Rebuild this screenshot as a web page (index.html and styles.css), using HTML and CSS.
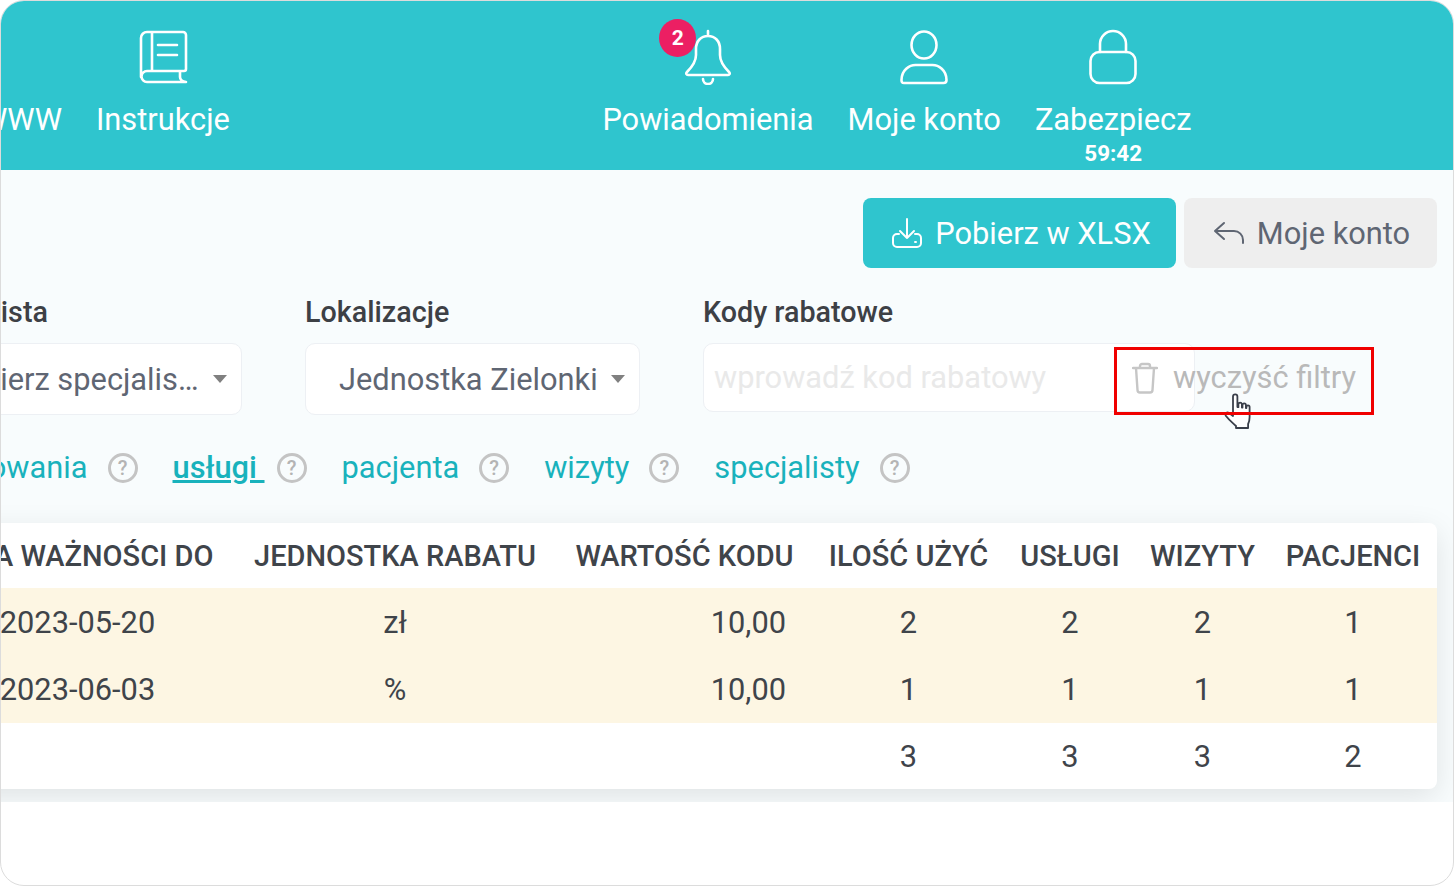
FILE: index.html
```html
<!DOCTYPE html>
<html lang="pl">
<head>
<meta charset="UTF-8" />
<title>Kody rabatowe</title>
<link rel="stylesheet" href="styles.css">
</head>
<body>
<div class="frame">
  <header class="topbar">
    <div class="nav-left">
      <a class="nav-item nav-www"><span class="nav-label">WWW</span></a>
      <a class="nav-item">
        <svg class="nav-icon" viewBox="0 0 50 56"><path d="M3 48V9a6 6 0 0 1 6-6h36a3 3 0 0 1 3 3v34a2 2 0 0 1-2 2H9a5.500 5.500 0 0 0 0 11h39M14 3v39M20 16h19M20 26h19M42 42v6q0 4 6 5"/></svg>
        <span class="nav-label">Instrukcje</span>
      </a>
    </div>
    <div class="nav-right">
      <a class="nav-item">
        <span class="badge">2</span>
        <svg class="nav-icon" viewBox="0 0 50 56"><path d="M25 7c-7 0-12 5-12 13v6c0 7-4 12-9 17-1.500 1.500-.5 3 1 3h40c1.500 0 2.500-1.500 1-3-5-5-9-10-9-17v-6c0-8-5-13-12-13zM25 7V2M20 50a5 5 0 0 0 10 0"/></svg>
        <span class="nav-label">Powiadomienia</span>
      </a>
      <a class="nav-item">
        <svg class="nav-icon" viewBox="0 0 50 56"><ellipse cx="25" cy="16" rx="12.500" ry="13.500"/><path d="M2.500 51c0-10 8-15 14-15h17c6 0 14 5 14 15 0 2-1 3-3 3H5c-2 0-2.500-1-2.500-3z"/></svg>
        <span class="nav-label">Moje konto</span>
      </a>
      <a class="nav-item">
        <svg class="nav-icon" viewBox="0 0 50 56"><path d="M12 23V15a13 13 0 0 1 26 0v8"/><rect x="2.500" y="23" width="45" height="31" rx="9"/></svg>
        <span class="nav-label">Zabezpiecz</span>
        <span class="timer">59:42</span>
      </a>
    </div>
  </header>

  <section class="content">
    <div class="actions">
      <button class="btn btn-primary">
        <svg class="btn-icon" viewBox="0 0 32 32"><path d="M16 2v19M9 14l7 7 7-7M8 17H6a4 4 0 0 0-4 4v5a4 4 0 0 0 4 4h20a4 4 0 0 0 4-4v-5a4 4 0 0 0-4-4h-2"/><path d="M24 25h1"/></svg>
        Pobierz w XLSX
      </button>
      <button class="btn btn-grey">
        <svg class="btn-icon" viewBox="0 0 32 32"><path d="M11 6L2 14l9 8M2 14h19c5 0 9 4 9 9v3"/></svg>
        Moje konto
      </button>
    </div>

    <div class="filters">
      <div class="field">
        <label class="field-label">Specjalista</label>
        <div class="select"><span class="select-text">Wybierz specjalis…</span><i class="caret"></i></div>
      </div>
      <div class="field">
        <label class="field-label">Lokalizacje</label>
        <div class="select"><span class="select-text">Jednostka Zielonki</span><i class="caret"></i></div>
      </div>
      <div class="field field-code">
        <label class="field-label">Kody rabatowe</label>
        <input class="code-input" type="text" placeholder="wprowadź kod rabatowy" />
      </div>
      <a class="clear">
        <svg class="clear-icon" viewBox="0 0 26 32"><path d="M1 6h24M8 6V4a2 2 0 0 1 2-2h6a2 2 0 0 1 2 2v2M4 6l1.500 22a2.500 2.500 0 0 0 2.500 2.500h10a2.500 2.500 0 0 0 2.500-2.500L22 6"/></svg>
        wyczyść filtry
      </a>
    </div>

    <div class="sorters">
      <a class="sorter">Według grupowania</a><i class="help">?</i>
      <a class="sorter sorter-active">usługi&nbsp;</a><i class="help">?</i>
      <a class="sorter">pacjenta</a><i class="help">?</i>
      <a class="sorter">wizyty</a><i class="help">?</i>
      <a class="sorter">specjalisty</a><i class="help">?</i>
    </div>

    <div class="card">
      <table class="report">
        <colgroup>
          <col class="c-date"><col class="c-unit"><col class="c-value"><col class="c-uses"><col class="c-serv"><col class="c-visits"><col class="c-pat">
        </colgroup>
        <thead>
          <tr><th>DATA WAŻNOŚCI DO</th><th>JEDNOSTKA RABATU</th><th class="th-value">WARTOŚĆ KODU</th><th>ILOŚĆ UŻYĆ</th><th>USŁUGI</th><th>WIZYTY</th><th>PACJENCI</th></tr>
        </thead>
        <tbody>
          <tr class="row-mark row-first"><td>2023-05-20</td><td>zł</td><td class="num">10,00</td><td>2</td><td>2</td><td>2</td><td>1</td></tr>
          <tr class="row-mark"><td>2023-06-03</td><td>%</td><td class="num">10,00</td><td>1</td><td>1</td><td>1</td><td>1</td></tr>
          <tr class="row-total"><td></td><td></td><td></td><td>3</td><td>3</td><td>3</td><td>2</td></tr>
        </tbody>
      </table>
    </div>
  </section>

  <svg class="cursor" viewBox="0 0 28 38"><path d="M9 22V3.500a2.200 2.200 0 0 1 4.400 0V14l1 .2V11a1.800 1.800 0 0 1 3.500 0v3.500h.6V12a1.700 1.700 0 0 1 3.400 0v3h.5v-1a1.600 1.600 0 0 1 3.200 0v10c0 3-.5 5-1.500 7v4H12v-2C9 30 5 27 2 23c-1.500-2.500 1-4.500 3-3l4 3z"/></svg>
  <div class="highlight"></div>
</div>
</body>
</html>
```

FILE: styles.css
```css
* {
  box-sizing: border-box;
}
html, body {
  margin: 0;
  height: 100%;
  background: #fff;
  overflow: hidden;
}
body {
  font-family: Roboto, "Liberation Sans", sans-serif;
}
.frame {
  position: relative;
  width: 1454px;
  height: 886px;
  background: #fff;
  border: 1px solid #dcdcdc;
  border-radius: 24px;
  overflow: hidden;
}

/* top bar */
.topbar {
  display: flex;
  height: 169px;
  background: #2fc5ce;
  color: #fff;
}
.nav-left, .nav-right {
  display: flex;
  gap: 34px;
}
.nav-left {
  margin-left: -21px;
}
.nav-right {
  margin-left: 372.500px;
}
.nav-item {
  position: relative;
  display: flex;
  flex-direction: column;
  align-items: center;
  padding-top: 28px;
}
.nav-www {
  padding-top: 84px;
}
.nav-icon {
  width: 50px;
  height: 56px;
  fill: none;
  stroke: #fff;
  stroke-width: 2.6;
  stroke-linecap: round;
  stroke-linejoin: round;
}
.nav-label {
  margin-top: 15px;
  font-size: 30.800px;
  line-height: 40px;
}
.timer {
  font-size: 22.400px;
  font-weight: 700;
  line-height: 26px;
}
.badge {
  position: absolute;
  top: 18px;
  left: 57px;
  width: 37px;
  height: 38px;
  border-radius: 50%;
  background: #ec1f63;
  font-size: 21px;
  font-weight: 700;
  line-height: 38px;
  text-align: center;
}

/* content */
.content {
  height: 632px;
  padding: 28px 16px 0 0;
  background: #f8fcfd;
  overflow: hidden;
}
.actions {
  display: flex;
  justify-content: flex-end;
  gap: 8px;
}
.btn {
  display: flex;
  align-items: center;
  justify-content: center;
  gap: 12px;
  height: 70px;
  border: none;
  border-radius: 8px;
  font-family: inherit;
  font-size: 30.800px;
}
.btn-primary {
  width: 313px;
  padding: 0 0 0 3px;
  background: #2fc5ce;
  color: #fff;
}
.btn-grey {
  width: 253px;
  padding: 0 0 0 2px;
  background: #eeeeee;
  color: #5f6673;
}
.btn-icon {
  width: 32px;
  height: 32px;
  fill: none;
  stroke: currentColor;
  stroke-width: 2;
  stroke-linecap: round;
  stroke-linejoin: round;
}

/* filters */
.filters {
  display: flex;
  gap: 63px;
  margin: 26px 0 0 -94px;
}
.field {
  width: 335px;
}
.field-code {
  width: 492px;
}
.field-label {
  display: block;
  margin-bottom: 12px;
  color: #3d4045;
  font-size: 28.700px;
  font-weight: 500;
  line-height: 37px;
}
.select {
  display: flex;
  align-items: center;
  height: 72px;
  padding: 0 14px 0 33px;
  background: #fff;
  border: 1px solid #edf0f4;
  border-radius: 10px;
  color: #5f6673;
  font-size: 30.800px;
}
.select-text {
  flex: 1;
  white-space: nowrap;
}
.caret {
  width: 0;
  height: 0;
  border-left: 7px solid transparent;
  border-right: 7px solid transparent;
  border-top: 8px solid #808080;
}
.code-input {
  display: block;
  width: 100%;
  height: 69px;
  padding: 0 10px;
  background: #fff;
  border: 1px solid #edf0f4;
  border-radius: 10px;
  font-family: inherit;
  font-size: 30.800px;
}
.code-input::placeholder {
  color: #e9e9e9;
  opacity: 1;
}
.clear {
  display: flex;
  align-items: center;
  gap: 15px;
  align-self: flex-start;
  height: 69px;
  margin: 49px 0 0 -126px;
  color: #b9b9b9;
  font-size: 30.800px;
  white-space: nowrap;
}
.clear-icon {
  width: 26px;
  height: 32px;
  fill: none;
  stroke: #c6c6c6;
  stroke-width: 2.400;
  stroke-linecap: round;
  stroke-linejoin: round;
}

/* sort links */
.sorters {
  display: flex;
  align-items: center;
  height: 40px;
  margin: 33px 0 0 -185px;
}
.sorter {
  color: #19b2bc;
  font-size: 30.800px;
  line-height: 40px;
  white-space: nowrap;
}
.sorter-active {
  font-weight: 500;
  text-decoration: underline;
}
.help {
  width: 30px;
  height: 30px;
  margin: 0 35px 0 20px;
  border: 3px solid #c4c4c4;
  border-radius: 50%;
  color: #b4b4b4;
  font-size: 20px;
  font-style: normal;
  font-weight: 500;
  line-height: 24px;
  text-align: center;
}
.sorter-active + .help {
  margin-left: 12px;
}

/* table */
.card {
  margin: 35px 0 0 -80px;
  background: #fff;
  border-radius: 8px;
  box-shadow: 0 8px 30px rgba(0, 0, 0, 0.1);
  overflow: hidden;
}
.report {
  width: 1517px;
  border-collapse: collapse;
  table-layout: fixed;
  color: #3f444a;
  font-size: 30.800px;
}
.c-date { width: 313px; }
.c-unit { width: 322px; }
.c-value { width: 256px; }
.c-uses { width: 193px; }
.c-serv { width: 130px; }
.c-visits { width: 135px; }
.c-pat { width: 168px; }
.report th {
  height: 65px;
  padding: 0;
  font-size: 29px;
  font-weight: 500;
  white-space: nowrap;
}
.report .th-value {
  padding-left: 1px;
}
.report td {
  padding: 0;
  height: 67px;
  text-align: center;
}
.report .row-first td {
  height: 68px;
}
.report .row-total td {
  height: 66px;
}
.report th:last-child, .report td:last-child {
  padding-right: 2px;
}
.report .num {
  padding-right: 26px;
  text-align: right;
}
.row-mark td {
  background: #fdf6e3;
}

/* overlays */
.highlight {
  position: absolute;
  left: 1113px;
  top: 346px;
  width: 260px;
  height: 68px;
  border: 3px solid #f00000;
}
.cursor {
  position: absolute;
  left: 1223px;
  top: 392px;
  width: 28px;
  height: 38px;
  fill: #fff;
  stroke: #3a3f4a;
  stroke-width: 1.800;
  stroke-linejoin: round;
}
```
